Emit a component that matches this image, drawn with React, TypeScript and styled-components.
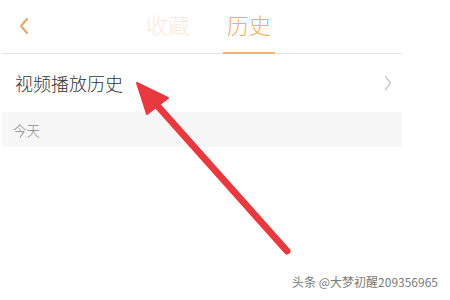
import styled, { createGlobalStyle } from 'styled-components';

const GlobalStyle = createGlobalStyle`
  html, body {
    margin: 0;
    padding: 0;
    background: #ffffff;
  }
  body {
    font-family: "Noto Sans CJK SC", "Noto Sans", sans-serif;
  }
`;

const Page = styled.div`
  position: relative;
  width: 450px;
  height: 300px;
  overflow: hidden;
  background: #ffffff;
`;

const Screen = styled.div`
  width: 400px;
  margin-left: 2px;
`;

const Header = styled.div`
  position: relative;
  height: 53px;
  border-bottom: 1px solid #e6e6e6;
  display: flex;
  justify-content: center;
  align-items: stretch;
`;

const BackButton = styled.div`
  position: absolute;
  left: 14px;
  top: 16px;
  width: 16px;
  height: 20px;
  display: flex;
  align-items: center;
  justify-content: center;
`;

const Tabs = styled.div`
  display: flex;
  gap: 29px;
  margin-left: 13px;
`;

const Tab = styled.div<{ $active?: boolean }>`
  position: relative;
  width: 52px;
  display: flex;
  justify-content: center;
  padding-top: 9px;
  font-size: 22px;
  font-weight: 300;
  line-height: 30px;
  color: ${p => (p.$active ? '#f1ad62' : '#f8ebde')};

  &::after {
    content: '';
    display: ${p => (p.$active ? 'block' : 'none')};
    position: absolute;
    left: 0;
    right: 0;
    bottom: -1px;
    height: 2px;
    background: #f3b46c;
  }
`;

const Row = styled.div`
  height: 58px;
  display: flex;
  align-items: center;
  justify-content: space-between;
  padding: 0 10px 0 13px;
`;

const RowTitle = styled.div`
  font-size: 18px;
  font-weight: 300;
  color: #333333;
`;

const SectionBand = styled.div`
  height: 35px;
  background: #f7f7f7;
  display: flex;
  align-items: center;
  padding-left: 11px;
  font-size: 13.5px;
  font-weight: 300;
  color: #8a8a8a;
`;

const Overlay = styled.svg`
  position: absolute;
  left: 0;
  top: 0;
  pointer-events: none;
`;

const Watermark = styled.div`
  position: absolute;
  right: 12px;
  bottom: 10px;
  font-family: "Noto Sans CJK SC", "Liberation Sans", sans-serif;
  font-size: 12px;
  color: #7a7a7a;
  text-shadow: 0 0 1px #fff, 0 0 2px #fff;
`;

export default function App() {
  return (
    <>
      <GlobalStyle />
      <Page>
        <Screen>
          <Header>
            <BackButton>
              <svg width="12" height="18" viewBox="0 0 12 18">
                <path d="M9 2 L3 9 L9 16" fill="none" stroke="#eba865" strokeWidth="2.2" strokeLinecap="round" strokeLinejoin="round" />
              </svg>
            </BackButton>
            <Tabs>
              <Tab>收藏</Tab>
              <Tab $active>历史</Tab>
            </Tabs>
          </Header>
          <Row>
            <RowTitle>视频播放历史</RowTitle>
            <svg width="8" height="16" viewBox="0 0 8 16">
              <path d="M1.5 1.5 L6.5 8 L1.5 14.5" fill="none" stroke="#c4c4c4" strokeWidth="1.3" strokeLinecap="round" strokeLinejoin="round" />
            </svg>
          </Row>
          <SectionBand>今天</SectionBand>
        </Screen>
        <Overlay width="450" height="300" viewBox="0 0 450 300">
          <line x1="287" y1="251" x2="155" y2="103" stroke="#e8393f" strokeWidth="7" strokeLinecap="round" />
          <polygon points="137,83 147,114 168,98" fill="#e8393f" stroke="#e8393f" strokeWidth="2" strokeLinejoin="round" />
        </Overlay>
        <Watermark>头条 @大梦初醒209356965</Watermark>
      </Page>
    </>
  );
}
